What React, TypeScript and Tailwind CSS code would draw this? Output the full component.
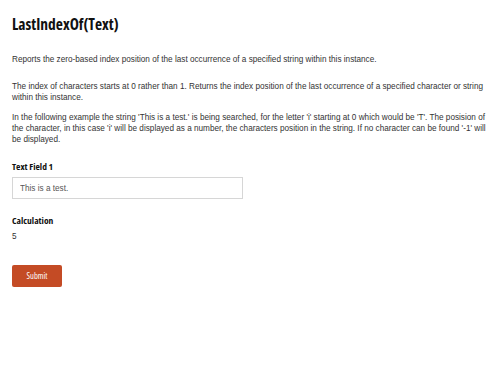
import React from "react";

const condensed = {
  fontFamily: '"Open Sans", sans-serif',
  fontStretch: "condensed",
};

export default function App() {
  return (
    <div className="min-h-[375px] w-[500px] bg-white px-3 pt-[14px] text-[#333] font-['Liberation_Sans',Arial,sans-serif]">
      <h1 style={condensed} className="text-[15.5px] font-bold leading-[20px] text-[#111]">
        LastIndexOf(Text)
      </h1>

      <p className="mt-[20px] text-[8.2px] leading-[11px]">
        Reports the zero-based index position of the last occurrence of a specified string within this instance.
      </p>
      <p className="mt-[16px] text-[8.2px] leading-[11px]">
        The index of characters starts at 0 rather than 1. Returns the index position of the last occurrence of a specified character or string within this instance.
      </p>
      <p className="mt-[9px] text-[8.2px] leading-[11px]">
        In the following example the string 'This is a test.' is being searched, for the letter 'i' starting at 0 which would be 'T'. The posision of the character, in this case 'i' will be displayed as a number, the characters position in the string. If no character can be found '-1' will be displayed.
      </p>

      <div className="mt-[16px]">
        <label style={condensed} className="block text-[9.5px] font-bold leading-[12px] text-[#111]">
          Text Field 1
        </label>
        <input
          defaultValue="This is a test."
          className="mt-[4px] h-[22px] w-[231px] border border-[#d6d6d6] px-[7px] text-[8.2px] text-[#555] outline-none"
        />
      </div>

      <div className="mt-[16px]">
        <div style={condensed} className="text-[9.5px] font-bold leading-[12px] text-[#111]">
          Calculation
        </div>
        <div className="mt-[4px] text-[8.2px] leading-[11px]">5</div>
      </div>

      <button
        style={condensed}
        className="mt-[23px] h-[22px] w-[50px] rounded-[2px] bg-[#c44b25] text-[8.5px] text-white"
      >
        Submit
      </button>
    </div>
  );
}
